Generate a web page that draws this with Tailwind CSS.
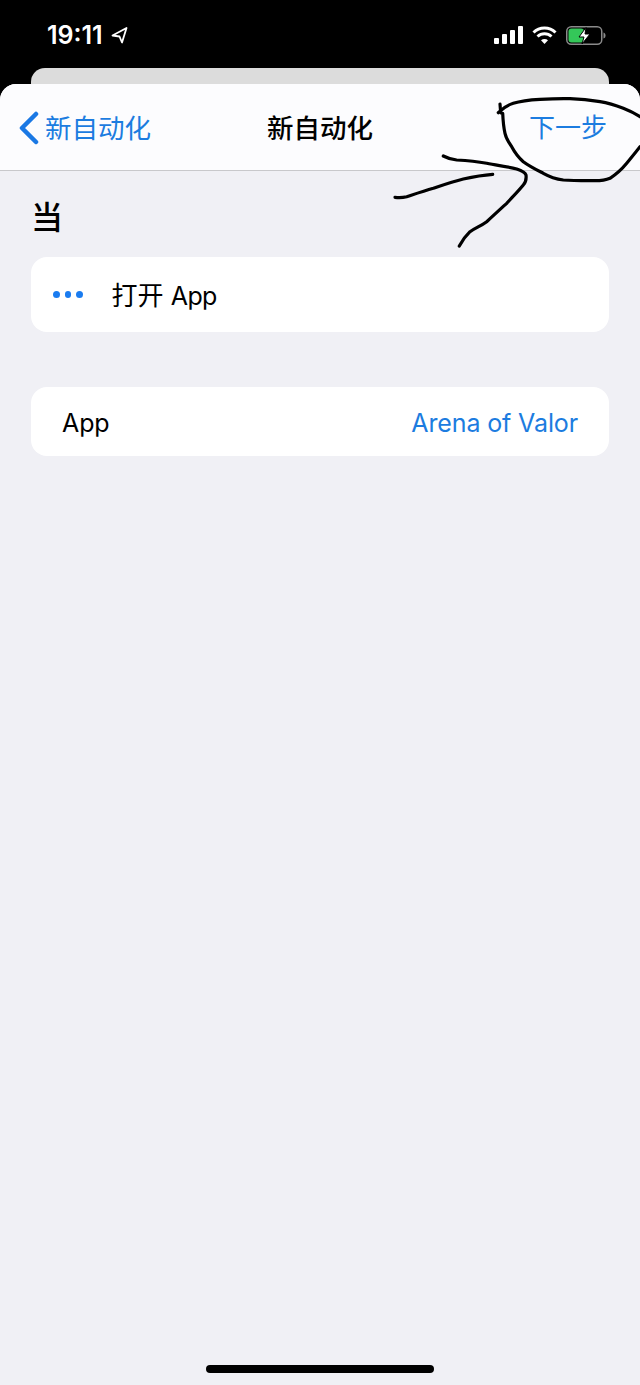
<!DOCTYPE html>
<html lang="zh-CN">
<head>
  <meta charset="UTF-8" />
  <meta name="viewport" content="width=device-width, initial-scale=1.0" />
  <title>新自动化</title>
  <script src="https://cdn.jsdelivr.net/npm/@tailwindcss/browser@4"></script>
</head>
<body class="bg-black">
  <div class="relative w-[640px] h-[1385px] flex flex-col overflow-hidden font-['Inter','Noto_Sans_CJK_SC',sans-serif]">

    <!-- status bar -->
    <div class="h-[68px] shrink-0 flex items-start justify-between pt-[20px] pl-[47px] pr-[34px] text-white">
      <div class="flex items-center gap-[8px]">
        <span class="text-[25px] leading-[30px] font-semibold">19:11</span>
        <svg width="17" height="18" viewBox="0 0 17 18" fill="none" stroke="white" stroke-width="1.8" stroke-linejoin="round"><path d="M1.5 9.5 L15.5 2 L11 16.5 L8.5 10.5 Z"/></svg>
      </div>
      <div class="flex items-center gap-[9px] h-[30px]">
        <svg width="29" height="18" viewBox="0 0 29 18" fill="white"><rect x="0" y="12" width="5" height="6" rx="1"/><rect x="8" y="8" width="5" height="10" rx="1"/><rect x="16" y="4" width="5" height="14" rx="1"/><rect x="24" y="0" width="5" height="18" rx="1"/></svg>
        <svg width="25" height="19" viewBox="0 0 25 19" fill="none" stroke="white" stroke-width="3"><path d="M1.5 6.5 C7.5 0.5 17.5 0.5 23.5 6.5"/><path d="M5.5 10.5 C9.5 6.8 15.5 6.8 19.5 10.5"/><path d="M12.5 18 L9 14.2 C11 12.6 14 12.6 16 14.2 Z" fill="white" stroke="none"/></svg>
        <svg width="40" height="19" viewBox="0 0 40 19" fill="none">
          <rect x="0.75" y="0.75" width="35" height="17.5" rx="4.5" stroke="#8a8a8a" stroke-width="1.5"/>
          <rect x="2.5" y="2.5" width="15.5" height="14" rx="3" fill="#34c759"/>
          <path d="M37.5 6.5 C39 7 39.5 8 39.5 9.5 C39.5 11 39 12 37.5 12.5 Z" fill="#8a8a8a"/>
          <path d="M20 1.5 L13 11 L18 11 L16 18 L24 8 L19 8 Z" fill="white" stroke="black" stroke-width="1"/>
        </svg>
      </div>
    </div>

    <!-- card behind the sheet -->
    <div class="h-[16px] shrink-0 mx-[31px] rounded-t-[14px] bg-[#dcdcdc]"></div>

    <!-- sheet -->
    <div class="flex-1 flex flex-col rounded-t-[16px] bg-[#f0f0f5] overflow-hidden">
      <div class="h-[87px] shrink-0 relative flex items-center justify-between pl-[19px] pr-[33px] pt-[1px] bg-[#fcfcfe] border-b border-[#c8c8cb]">
        <div class="flex items-center gap-[6px] text-[#1c7ce0]">
          <svg width="20" height="34" viewBox="0 0 20 34" fill="none" stroke="#1a78e4" stroke-width="4.5" stroke-linecap="round" stroke-linejoin="round"><path d="M17 3 L3 17 L17 31"/></svg>
          <span class="text-[26.5px] leading-[34px]">新自动化</span>
        </div>
        <span class="absolute left-0 right-0 text-center text-[26.5px] leading-[34px] font-medium text-black">新自动化</span>
        <span class="text-[26px] leading-[34px] text-[#1c7ce0]">下一步</span>
      </div>

      <div class="px-[31px]">
        <div class="h-[86px] flex items-center pt-[8px] text-[32px] font-medium text-black">当</div>

        <div class="h-[75px] flex items-center pl-[22px] pt-[2px] bg-white rounded-[16px]">
          <div class="flex items-center gap-[5px] w-[58.5px] -mt-[2px]">
            <span class="w-[6.5px] h-[6.5px] rounded-full bg-[#1a7cf0]"></span>
            <span class="w-[6.5px] h-[6.5px] rounded-full bg-[#1a7cf0]"></span>
            <span class="w-[6.5px] h-[6.5px] rounded-full bg-[#1a7cf0]"></span>
          </div>
          <span class="text-[26px] leading-[34px] text-black">打开 <span class="text-[25px] tracking-[-0.7px]">App</span></span>
        </div>

        <div class="h-[69px] mt-[55px] flex items-center justify-between px-[31px] pt-[2px] bg-white rounded-[16px] text-[25px] leading-[34px] tracking-[-0.12px]">
          <span class="text-black">App</span>
          <span class="text-[#1c7ce0]">Arena of Valor</span>
        </div>
      </div>
    </div>

    <!-- home indicator -->
    <div class="absolute left-[206px] top-[1365px] w-[228px] h-[8px] rounded-full bg-black"></div>

    <!-- hand drawn markup -->
    <svg class="absolute left-0 top-0" width="640" height="300" viewBox="0 0 640 300" fill="none" stroke="#000" stroke-width="3.2" stroke-linecap="round" stroke-linejoin="round">
      <path d="M498.3 112.7 C503 108 508 105 513.3 103.3 C522 100.5 531 99.8 540 99.3 C550 98.8 560 98.5 570 98.7 C580 99 590 100 600 101.7 C608 103 616 105.5 623.3 108.3 C629 110.5 635 113.5 640 116.7"/>
      <path d="M640 146.7 C636 152 631 158 626.7 163.3 C622 169 616 174.5 610 178.3 C605 180.5 599 180.8 593.3 180.7 C583 180.7 573 180.8 563.3 180 C556 179 549 176.5 543.3 173.3 C536 169.5 529 166 523.3 161.7 C518 157 514.5 152 511.7 146.7 C508.5 142 506 138 505 133.3 C503.5 127 503 120 502.7 113.3"/>
      <path d="M500 104 L500.7 113"/>
      <path d="M443.3 156 C447 158 452 159.5 456.7 160 C466 160.5 477 161.5 486.7 163.3 C497 165.5 508 166.5 516.7 169 C521 170.5 525 172 526 175 C526.5 179 525.5 182.5 523.3 185 C518 191.5 512 197.5 506.7 203.3 C500 209.5 493 216 486.7 221.7 C481 226 475 228 470 231.7 C465.5 236 462 241 459.3 246"/>
      <path d="M395 197.3 C399 197.8 403 197.6 406.7 196.7 C415 194 424 191 433.3 188.3 C443 185 453 181.5 463.3 179 C473 176.8 483 175 492.7 174.3"/>
    </svg>
  </div>
</body>
</html>
